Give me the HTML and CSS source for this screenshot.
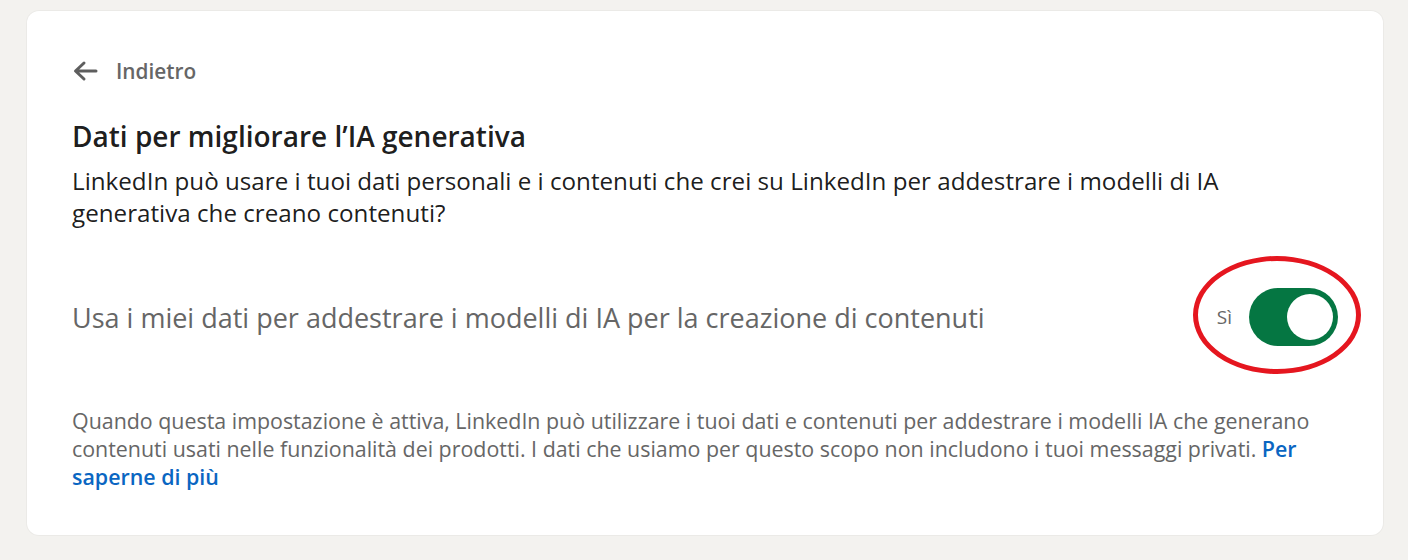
FILE: index.html
```html
<!DOCTYPE html>
<html lang="it">
<head>
<meta charset="utf-8">
<title>Dati per migliorare l'IA generativa</title>
<link rel="stylesheet" href="styles.css">
</head>
<body>
<main class="card">
  <a class="back" href="#">
    <svg class="back-icon" width="26" height="22" viewBox="0 0 26 22" aria-hidden="true">
      <path d="M24 11H4M12 3L3.5 11 12 19" fill="none" stroke="#5e5e5e" stroke-width="3" stroke-linecap="round" stroke-linejoin="round"/>
    </svg>
    <span>Indietro</span>
  </a>
  <h1 class="title">Dati per migliorare l’IA generativa</h1>
  <p class="desc">LinkedIn può usare i tuoi dati personali e i contenuti che crei su LinkedIn per addestrare i modelli di IA generativa che creano contenuti?</p>
  <div class="setting">
    <span class="setting-label">Usa i miei dati per addestrare i modelli di IA per la creazione di contenuti</span>
    <div class="toggle-wrap">
      <span class="toggle-state">Sì</span>
      <span class="toggle"><span class="knob"></span></span>
      <span class="ring"></span>
    </div>
  </div>
  <p class="note">Quando questa impostazione è attiva, LinkedIn può utilizzare i tuoi dati e contenuti per addestrare i modelli IA che generano contenuti usati nelle funzionalità dei prodotti. I dati che usiamo per questo scopo non includono i tuoi messaggi privati. <a class="link" href="#">Per saperne di più</a></p>
</main>
</body>
</html>
```
FILE: styles.css
```css
html, body {
  margin: 0;
  padding: 0;
  background: #f3f2ef;
}
body {
  font-family: "Open Sans", "Noto Sans", sans-serif;
  color: rgba(0,0,0,0.9);
  padding: 11px 25px 25px 27px;
}
.card {
  background: #fff;
  border-radius: 12px;
  height: 524px;
  box-sizing: border-box;
  padding: 47px 45px 0 45px;
  box-shadow: 0 0 0 1px rgba(0,0,0,0.03);
}
.back {
  display: flex;
  align-items: center;
  gap: 18px;
  color: #666;
  text-decoration: none;
  font-size: 20.8px;
  font-weight: 600;
  height: 26px;
}
.back-icon { display: block; }
.title {
  margin: 34px 0 0;
  font-size: 28px;
  font-weight: 600;
  line-height: 36px;
  color: rgba(0,0,0,0.9);
}
.desc {
  margin: 11px 0 0;
  font-size: 24.2px;
  line-height: 32px;
  max-width: 1170px;
}
.setting {
  display: flex;
  align-items: center;
  justify-content: space-between;
  margin-top: 43px;
  height: 90px;
}
.setting-label {
  font-size: 27px;
  color: #666;
}
.toggle-wrap {
  position: relative;
  display: flex;
  align-items: center;
  gap: 17px;
}
.toggle-state {
  font-size: 19px;
  color: #666;
}
.toggle {
  display: block;
  width: 89px;
  height: 58px;
  border-radius: 29px;
  background: #057642;
  position: relative;
}
.knob {
  position: absolute;
  right: 5px;
  top: 6px;
  width: 46px;
  height: 46px;
  border-radius: 50%;
  background: #fff;
}
.ring {
  position: absolute;
  left: -24px;
  right: -23px;
  top: -32px;
  bottom: -28px;
  border: 5px solid #e5161f;
  border-radius: 50%;
}
.note {
  margin: 45px 0 0;
  font-size: 21.4px;
  line-height: 28px;
  color: #666;
}
.link {
  color: #0a66c2;
  font-weight: 600;
  text-decoration: none;
}
```
